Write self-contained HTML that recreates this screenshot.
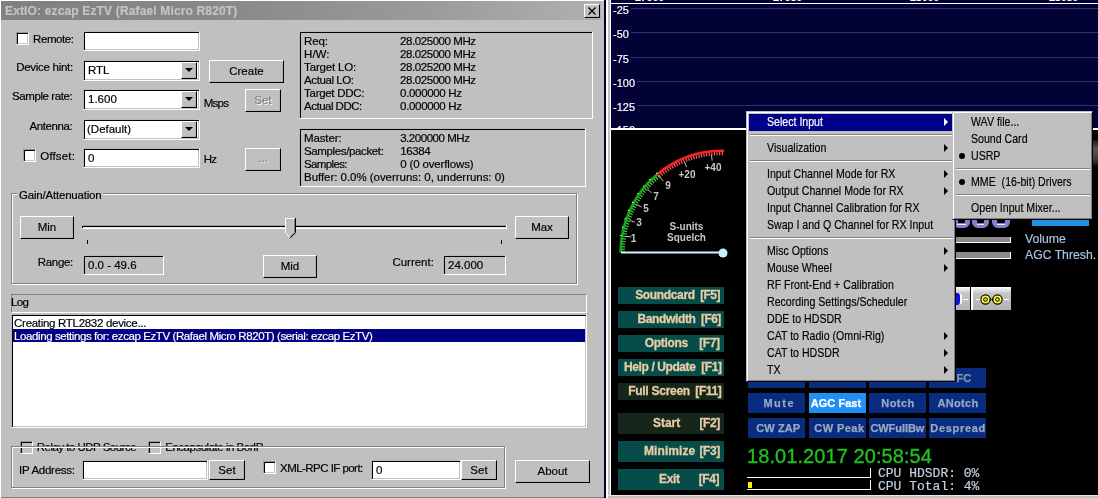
<!DOCTYPE html>
<html>
<head>
<meta charset="utf-8">
<title>ExtIO: ezcap EzTV (Rafael Micro R820T)</title>
<style>
*{box-sizing:border-box;margin:0;padding:0}
html,body{width:1098px;height:498px;overflow:hidden;background:#000}
body{position:relative;will-change:transform;font-family:"Liberation Sans",sans-serif;font-size:11.5px;color:#000;line-height:13px;-webkit-text-stroke:.18px}
.a{position:absolute;white-space:nowrap}
#dlg{left:0;top:0;width:604px;height:498px;background:#c0c0c0;border-left:1px solid #fff;border-top:1px solid #fff}
#dlg .in{left:0;top:0;width:603px;height:497px;border-bottom:1px solid #808080}
#title{left:1px;top:1px;width:600px;height:19px;background:linear-gradient(90deg,#808080 0,#888 36%,#9a9a9a 70%,#b0b0b0 100%);color:#c4c4c4;font-weight:bold;font-size:12px;line-height:20px;padding-top:0;padding-left:4px;letter-spacing:.15px}
.btn{position:absolute;background:#c0c0c0;border:1px solid;border-color:#fff #000 #000 #fff;box-shadow:inset -1px -1px 0 #b4b4b4;text-align:center;white-space:nowrap}
.dis{color:#808080;text-shadow:1px 1px 0 #fff}
.sunk{position:absolute;background:#fff;border:1px solid;border-color:#b8b8b8 #fff #fff #b8b8b8;box-shadow:inset 1px 1px 0 #000,inset -1px -1px 0 #c0c0c0;white-space:nowrap}
.ro{background:#c0c0c0}
.chk{position:absolute;width:13px;height:13px;background:#fff;border:1px solid;border-color:#989898 #fff #fff #989898;box-shadow:inset 1px 1px 0 #000,inset -1px -1px 0 #c8c8c8}
.grp{position:absolute;border:1px solid #808080;box-shadow:inset 1px 1px 0 #fff,1px 1px 0 #fff}
.fr{position:absolute;border:1px solid;border-color:#808080 #fff #fff #808080}
.dd{position:absolute;right:2px;top:1px;width:16px;bottom:1px;background:#c0c0c0;border:1px solid;border-color:#fff #000 #000 #fff;box-shadow:inset -1px -1px 0 #b0b0b0}
.dd:after{content:"";position:absolute;left:3px;top:5px;border:solid transparent;border-width:4.4px 4px 0;border-top-color:#000;margin-left:-.5px}
.n{letter-spacing:-.2px}
#app{left:604px;top:0;width:494px;height:498px;background:#000}
.tb{position:absolute;height:17px;background:#064c48;color:#e8cca6;font-weight:bold;font-size:12px;line-height:17px;left:618px;width:106px;white-space:nowrap;-webkit-text-stroke:.3px #e8cca6}
.tb.h{height:21px;line-height:21px}
.tb.o{background:#16261a}
.tb span{position:absolute;top:0}
.bb{position:absolute;width:57px;height:20px;background:#072c80;color:#98a8c2;overflow:hidden;font-weight:bold;font-size:11px;line-height:20px;text-align:center;white-space:nowrap;-webkit-text-stroke:.25px}
.menu{position:absolute;background:#c0c0c0;border:1px solid;border-color:#c0c0c0 #000 #000 #c0c0c0;box-shadow:inset 1px 1px 0 #fff,inset -1px -1px 0 #808080}
.mi{position:absolute;left:2px;right:2px;height:17px;line-height:16px;white-space:nowrap;font-size:13px}
.mi span{display:inline-block;transform:scaleX(.815);transform-origin:0 50%}
.mi.sel{background:#00008a;color:#fff}
.mi b{position:absolute;right:5px;top:3.5px;border:solid transparent;border-width:4px 0 4px 4.6px;border-left-color:#000;width:0;height:0}
.mi.sel b{border-left-color:#fff}
.mi i{position:absolute;left:4px;top:5px;width:6px;height:6px;border-radius:3px;background:#000}
.ms{position:absolute;left:3px;right:2px;height:2px;border-top:1px solid #808080;border-bottom:1px solid #fff}
</style>
</head>
<body>
<!-- ================= LEFT DIALOG ================= -->
<div id="dlg" class="a"><div class="in a"></div></div>
<div id="title" class="a">ExtIO: ezcap EzTV (Rafael Micro R820T)</div>
<div class="btn" style="left:584px;top:4px;width:16px;height:14px"><svg width="14" height="12" style="position:absolute;left:0;top:0"><path d="M3.5 2.5l7 7M10.5 2.5l-7 7" stroke="#000" stroke-width="1.350" fill="none"/></svg></div>
<div class="chk" style="left:16px;top:32px"></div>
<div class="a" style="left:33.1px;top:33px;font-size:11.5px;letter-spacing:-0.44px">Remote:</div>
<div class="sunk" style="left:83px;top:31px;width:117px;height:20px;line-height:18px;padding-left:4px"></div>
<div class="a" style="left:16.2px;top:61px;font-size:11.5px;letter-spacing:-0.28px">Device hint:</div>
<div class="sunk" style="left:83px;top:60px;width:117px;height:21px;line-height:19px;padding-left:4px">RTL<div class="dd"></div></div>
<div class="btn" style="left:209px;top:60px;width:75px;height:23px;line-height:21px">Create</div>
<div class="a" style="left:12.1px;top:90px;font-size:11.5px;letter-spacing:-0.42px">Sample rate:</div>
<div class="sunk" style="left:83px;top:89px;width:117px;height:21px;line-height:19px;padding-left:4px">1.600<div class="dd"></div></div>
<div class="a" style="left:203.8px;top:97px;font-size:11.5px;letter-spacing:-0.76px">Msps</div>
<div class="btn dis" style="left:245px;top:89px;width:36px;height:23px;line-height:21px">Set</div>
<div class="a" style="left:29.6px;top:120px;font-size:11.5px;letter-spacing:-0.42px">Antenna:</div>
<div class="sunk" style="left:83px;top:119px;width:117px;height:21px;line-height:19px;padding-left:3px">(Default)<div class="dd"></div></div>
<div class="chk" style="left:23px;top:149px"></div>
<div class="a" style="left:40.3px;top:150px;font-size:11.5px;letter-spacing:0.15px">Offset:</div>
<div class="sunk" style="left:83px;top:148px;width:117px;height:20px;line-height:18px;padding-left:4px">0</div>
<div class="a" style="left:203.8px;top:153px;font-size:11.5px;letter-spacing:-0.86px">Hz</div>
<div class="btn dis" style="left:245px;top:148px;width:36px;height:23px;line-height:19px">...</div>
<div class="sunk ro" style="left:299px;top:31px;width:294px;height:88px"></div>
<div class="a" style="left:304.1px;top:35px;font-size:11.5px;letter-spacing:-0.17px">Req:</div>
<div class="a" style="left:400.1px;top:35px;font-size:11.5px;letter-spacing:-0.44px">28.025000 MHz</div>
<div class="a" style="left:304.1px;top:48px;font-size:11.5px;letter-spacing:-0.01px">H/W:</div>
<div class="a" style="left:400.1px;top:48px;font-size:11.5px;letter-spacing:-0.44px">28.025000 MHz</div>
<div class="a" style="left:304.1px;top:61px;font-size:11.5px;letter-spacing:-0.17px">Target LO:</div>
<div class="a" style="left:400.1px;top:61px;font-size:11.5px;letter-spacing:-0.44px">28.025200 MHz</div>
<div class="a" style="left:304.1px;top:74px;font-size:11.5px;letter-spacing:-0.42px">Actual LO:</div>
<div class="a" style="left:400.1px;top:74px;font-size:11.5px;letter-spacing:-0.44px">28.025000 MHz</div>
<div class="a" style="left:304.1px;top:87px;font-size:11.5px;letter-spacing:-0.3px">Target DDC:</div>
<div class="a" style="left:400.1px;top:87px;font-size:11.5px;letter-spacing:-0.33px">0.000000 Hz</div>
<div class="a" style="left:304.1px;top:100px;font-size:11.5px;letter-spacing:-0.52px">Actual DDC:</div>
<div class="a" style="left:400.1px;top:100px;font-size:11.5px;letter-spacing:-0.33px">0.000000 Hz</div>
<div class="sunk ro" style="left:299px;top:128px;width:287px;height:59px"></div>
<div class="a" style="left:304.0px;top:132px;font-size:11.5px;letter-spacing:-0.12px">Master:</div>
<div class="a" style="left:400.2px;top:132px;font-size:11.5px;letter-spacing:-0.46px">3.200000 MHz</div>
<div class="a" style="left:304.0px;top:145px;font-size:11.5px;letter-spacing:-0.37px">Samples/packet:</div>
<div class="a" style="left:400.2px;top:145px;font-size:11.5px;letter-spacing:-0.4px">16384</div>
<div class="a" style="left:304.0px;top:158px;font-size:11.5px;letter-spacing:-0.63px">Samples:</div>
<div class="a" style="left:400.2px;top:158px;font-size:11.5px;letter-spacing:-0.14px">0 (0 overflows)</div>
<div class="a" style="left:304.0px;top:171px;font-size:11.5px;letter-spacing:-0.04px">Buffer: 0.0% (overruns: 0, underruns: 0)</div>
<div class="grp" style="left:11px;top:193px;width:566px;height:91px"></div>
<div class="a" style="left:17.1px;top:189px;font-size:11.5px;letter-spacing:-0.21px;background:#c0c0c0;padding:0 2px">Gain/Attenuation</div>
<div class="btn" style="left:20px;top:216px;width:54px;height:23px;line-height:21px">Min</div>
<div class="btn" style="left:515px;top:216px;width:54px;height:23px;line-height:21px">Max</div>
<div class="a" style="left:82px;top:225px;width:425px;height:1px;background:#989898"></div><div class="a" style="left:82px;top:226px;width:424px;height:1px;background:#000"></div><div class="a" style="left:83px;top:227px;width:423px;height:1px;background:#e0e0e0"></div><div class="a" style="left:82px;top:228px;width:425px;height:1px;background:#fff"></div><div class="a" style="left:506px;top:225px;width:1px;height:4px;background:#fff"></div><div class="a" style="left:82px;top:227px;width:1px;height:1px;background:#000"></div>
<svg class="a" style="left:284px;top:217px" width="13" height="23" viewBox="0 0 13 23"><path d="M1.5 1.5h9v14l-4.5 5-4.500-5z" fill="#c0c0c0"/><path d="M1.500 15.500v-14h9" stroke="#fff" fill="none"/><path d="M1.500 15.500l4.500 5" stroke="#fff" fill="none"/><path d="M11.500 1v14.700l-5.500 5.500" stroke="#000" fill="none"/><path d="M10.500 2v13.500l-4.500 4.500" stroke="#808080" fill="none"/></svg>
<div class="a" style="left:87px;top:240px;width:1px;height:4px;background:#000"></div>
<div class="a" style="left:501px;top:240px;width:1px;height:4px;background:#000"></div>
<div class="a" style="left:37.8px;top:256px;font-size:11.5px;letter-spacing:-0.32px">Range:</div>
<div class="sunk ro" style="left:83px;top:255px;width:81px;height:20px;line-height:18px;padding-left:4px">0.0 - 49.6</div>
<div class="btn" style="left:263px;top:255px;width:54px;height:23px;line-height:21px">Mid</div>
<div class="a" style="left:392.4px;top:256px;font-size:11.5px;letter-spacing:-0.01px">Current:</div>
<div class="sunk ro" style="left:443px;top:255px;width:63px;height:20px;line-height:18px;padding-left:4px">24.000</div>
<div class="fr" style="left:11px;top:294px;width:576px;height:19px"></div>
<div class="a" style="left:11.1px;top:296px;font-size:11.5px;letter-spacing:-0.69px">Log</div>
<div class="sunk" style="left:11px;top:314px;width:576px;height:114px"></div>
<div class="a" style="left:14.1px;top:317px;font-size:11.5px;letter-spacing:-0.3px">Creating RTL2832 device...</div>
<div class="a" style="left:13px;top:329px;width:572px;height:13px;background:#000080"></div>
<div class="a" style="left:14.1px;top:330px;font-size:11.5px;letter-spacing:-0.41px;color:#fff">Loading settings for: ezcap EzTV (Rafael Micro R820T) (serial: ezcap EzTV)</div>
<div class="chk" style="left:20px;top:441px;background:#c0c0c0"></div>
<div class="a" style="left:36.8px;top:441px;font-size:11.5px;letter-spacing:-0.52px">Relay to UDP Source</div>
<div class="chk" style="left:148px;top:441px;background:#c0c0c0"></div>
<div class="a" style="left:165.2px;top:441px;font-size:11.5px;letter-spacing:-0.48px">Encapsulate in BorIP</div>
<div class="grp" style="left:11px;top:446px;width:494px;height:42px"></div>
<div class="a" style="left:19.1px;top:464px;font-size:11.5px;letter-spacing:-0.28px">IP Address:</div>
<div class="sunk" style="left:82px;top:460px;width:126px;height:20px;line-height:18px;padding-left:4px"></div>
<div class="btn" style="left:209px;top:460px;width:36px;height:20px;line-height:19px">Set</div>
<div class="chk" style="left:263px;top:461px"></div>
<div class="a" style="left:280.1px;top:462px;font-size:11.5px;letter-spacing:-0.55px">XML-RPC IF port:</div>
<div class="sunk" style="left:371px;top:460px;width:90px;height:20px;line-height:18px;padding-left:4px">0</div>
<div class="btn" style="left:461px;top:460px;width:36px;height:20px;line-height:19px">Set</div>
<div class="btn" style="left:515px;top:460px;width:75px;height:23px;line-height:21px">About</div>
<!-- ================= RIGHT APP ================= -->
<div id="app" class="a"></div>
<div class="a" style="left:604px;top:0;width:2px;height:498px;background:#000030"></div>
<div class="a" style="left:606px;top:0;width:2px;height:498px;background:#fff"></div>
<div class="a" style="left:608px;top:0;width:2px;height:498px;background:#c0c0c0"></div>
<div class="a" style="left:610px;top:0;width:1px;height:495px;background:#fff"></div>
<div class="a" style="left:608px;top:495px;width:490px;height:3px;background:#c0c0c0;border-top:1px solid #e8e8e8"></div>
<div class="a" id="spec" style="left:611px;top:0;width:487px;height:128px;background:#020236;color:#fff;font-size:11px;overflow:hidden">
<div class="a" style="left:0;top:3px;width:487px;height:1px;background:#fff"></div>
<div class="a" style="left:19px;top:8px;width:468px;height:1px;background:#30306a"></div>
<div class="a" style="left:2px;top:4px;background:#020236;padding-right:2px;line-height:13px">-25</div>
<div class="a" style="left:19px;top:32px;width:468px;height:1px;background:#30306a"></div>
<div class="a" style="left:2px;top:28px;background:#020236;padding-right:2px;line-height:13px">-50</div>
<div class="a" style="left:19px;top:57px;width:468px;height:1px;background:#30306a"></div>
<div class="a" style="left:2px;top:53px;background:#020236;padding-right:2px;line-height:13px">-75</div>
<div class="a" style="left:19px;top:81px;width:468px;height:1px;background:#30306a"></div>
<div class="a" style="left:2px;top:77px;background:#020236;padding-right:2px;line-height:13px">-100</div>
<div class="a" style="left:19px;top:105px;width:468px;height:1px;background:#30306a"></div>
<div class="a" style="left:2px;top:101px;background:#020236;padding-right:2px;line-height:13px">-125</div>
<div class="a" style="left:19px;top:129px;width:468px;height:1px;background:#30306a"></div>
<div class="a" style="left:2px;top:124px;background:#020236;padding-right:2px;line-height:13px">-150</div>
<div class="a" style="left:24px;top:-9px;font-weight:bold;line-height:13px;letter-spacing:-.3px">27900</div>
<div class="a" style="left:162px;top:-9px;font-weight:bold;line-height:13px;letter-spacing:-.3px">27950</div>
<div class="a" style="left:299px;top:-9px;font-weight:bold;line-height:13px;letter-spacing:-.3px">28000</div>
<div class="a" style="left:438px;top:-9px;font-weight:bold;line-height:13px;letter-spacing:-.3px">28050</div>
</div>
<div class="a" style="left:611px;top:128px;width:487px;height:2px;background:#fff"></div>
<svg class="a" style="left:611px;top:130px" width="140" height="130" viewBox="611 130 140 130">
<path d="M620.6 252.5A101.7 101.7 0 0 1 657.5 174.1" stroke="#10a810" stroke-width="2.6" fill="none"/>
<path d="M657.5 174.1A101.7 101.7 0 0 1 724.1 150.8" stroke="#ff2020" stroke-width="2.6" fill="none"/>
<path d="M623.3 252.5A99 99 0 0 1 659.2 176.2" stroke="#48c848" stroke-width="3.4" fill="none" stroke-dasharray="1.2 1.4"/>
<path d="M659.2 176.2A99 99 0 0 1 724.0 153.5" stroke="#ff5858" stroke-width="3.4" fill="none" stroke-dasharray="1.2 1.4"/>
<circle cx="620.9" cy="235.4" r=".7" fill="#e8ffe8"/>
<circle cx="622.7" cy="226.9" r=".7" fill="#e8ffe8"/>
<circle cx="625.2" cy="218.9" r=".7" fill="#e8ffe8"/>
<circle cx="628.5" cy="210.4" r=".7" fill="#e8ffe8"/>
<circle cx="632.7" cy="202.2" r=".7" fill="#e8ffe8"/>
<circle cx="637.9" cy="193.8" r=".7" fill="#e8ffe8"/>
<circle cx="643.8" cy="186.1" r=".7" fill="#e8ffe8"/>
<circle cx="650.0" cy="179.4" r=".7" fill="#e8ffe8"/>
<circle cx="656.8" cy="173.3" r=".7" fill="#e8ffe8"/>
<path d="M625.7 236.2L631.1 237.1" stroke="#c0c0c0" stroke-width="1"/>
<path d="M629.7 220.4L634.9 222.2" stroke="#c0c0c0" stroke-width="1"/>
<path d="M636.8 204.5L641.6 207.2" stroke="#c0c0c0" stroke-width="1"/>
<path d="M647.4 189.2L651.6 192.8" stroke="#c0c0c0" stroke-width="1"/>
<path d="M659.8 177.0L663.3 181.2" stroke="#c0c0c0" stroke-width="1"/>
<path d="M684.5 162.1L686.6 167.2" stroke="#c0c0c0" stroke-width="1"/>
<path d="M711.5 155.1L712.1 160.6" stroke="#c0c0c0" stroke-width="1"/>
<text x="633.5" y="242" text-anchor="middle" font-family="Liberation Sans,sans-serif" font-weight="bold" font-size="10" fill="#c8c8c8">1</text>
<text x="639" y="226" text-anchor="middle" font-family="Liberation Sans,sans-serif" font-weight="bold" font-size="10" fill="#c8c8c8">3</text>
<text x="646" y="212" text-anchor="middle" font-family="Liberation Sans,sans-serif" font-weight="bold" font-size="10" fill="#c8c8c8">5</text>
<text x="656" y="199.5" text-anchor="middle" font-family="Liberation Sans,sans-serif" font-weight="bold" font-size="10" fill="#c8c8c8">7</text>
<text x="668" y="189" text-anchor="middle" font-family="Liberation Sans,sans-serif" font-weight="bold" font-size="10" fill="#c8c8c8">9</text>
<text x="687" y="178" text-anchor="middle" font-family="Liberation Sans,sans-serif" font-weight="bold" font-size="10" fill="#c8c8c8">+20</text>
<text x="713" y="171" text-anchor="middle" font-family="Liberation Sans,sans-serif" font-weight="bold" font-size="10" fill="#c8c8c8">+40</text>
<text x="686.5" y="229.500" text-anchor="middle" font-family="Liberation Sans,sans-serif" font-weight="bold" font-size="10" fill="#c8c8c8">S-units</text>
<text x="686.5" y="240.500" text-anchor="middle" font-family="Liberation Sans,sans-serif" font-weight="bold" font-size="10" fill="#c8c8c8">Squelch</text>
<rect x="621" y="251.500" width="102" height="2" fill="#d0f4ff"/>
<circle cx="723" cy="253" r="4.500" fill="#c8f0ff"/>
</svg>
<div class="tb" style="top:287px"><span style="left:17.2px;letter-spacing:-0.35px">Soundcard</span><span style="left:82.2px;letter-spacing:-0.6px">[F5]</span></div>
<div class="tb" style="top:311px"><span style="left:19.4px;letter-spacing:-0.35px">Bandwidth</span><span style="left:83.1px;letter-spacing:-0.63px">[F6]</span></div>
<div class="tb" style="top:335px"><span style="left:26.7px;letter-spacing:-0.3px">Options</span><span style="left:81.2px;letter-spacing:-0.43px">[F7]</span></div>
<div class="tb" style="top:359px"><span style="left:6.1px;letter-spacing:-0.41px">Help / Update</span><span style="left:83.2px;letter-spacing:-0.43px">[F1]</span></div>
<div class="tb o" style="top:383px"><span style="left:10.2px;letter-spacing:-0.27px">Full Screen</span><span style="left:77.3px;letter-spacing:-0.38px">[F11]</span></div>
<div class="tb h o" style="top:413px"><span style="left:35.0px;letter-spacing:-0.04px">Start</span><span style="left:81.5px;letter-spacing:-0.43px">[F2]</span></div>
<div class="tb h" style="top:441px"><span style="left:26.0px;letter-spacing:0.08px">Minimize</span><span style="left:81.5px;letter-spacing:-0.43px">[F3]</span></div>
<div class="tb h" style="top:469px"><span style="left:41.0px;letter-spacing:-0.37px">Exit</span><span style="left:80.8px;letter-spacing:-0.43px">[F4]</span></div>
<div class="bb" style="left:748px;top:368px"></div><div class="bb" style="left:809px;top:368px"></div><div class="bb" style="left:869px;top:368px"></div><div class="bb" style="left:929px;top:368px;text-align:left;padding-left:19.5px;color:#8494b4">AFC</div>
<div class="bb" style="left:748px;top:393px;text-align:left;padding-left:15.4px;letter-spacing:1.48px">Mute</div>
<div class="bb" style="left:809px;top:393px;text-align:left;padding-left:1.7px;letter-spacing:0.05px;background:#2090f4;color:#fff">AGC Fast</div>
<div class="bb" style="left:869px;top:393px;text-align:left;padding-left:12.3px;letter-spacing:0.43px">Notch</div>
<div class="bb" style="left:929px;top:393px;text-align:left;padding-left:8.4px;letter-spacing:0.34px">ANotch</div>
<div class="bb" style="left:748px;top:418px;text-align:left;padding-left:8.3px;letter-spacing:0.08px">CW ZAP</div>
<div class="bb" style="left:809px;top:418px;text-align:left;padding-left:5.3px;letter-spacing:0.44px">CW Peak</div>
<div class="bb" style="left:869px;top:418px;text-align:left;padding-left:1.4px;letter-spacing:-0.06px">CWFullBw</div>
<div class="bb" style="left:929px;top:418px;text-align:left;padding-left:1.3px;letter-spacing:0.69px">Despread</div>
<div class="a" style="left:747px;top:444px;font-size:20px;line-height:24px;color:#22c022;letter-spacing:.08px;-webkit-text-stroke:.35px #22c022">18.01.2017 20:58:54</div>
<div class="a" style="left:747px;top:468px;width:124px;height:10px;border-right:1px solid #fff;border-bottom:1px solid #fff"></div>
<div class="a" style="left:747px;top:480px;width:124px;height:10px;border-right:1px solid #fff;border-bottom:1px solid #fff"></div>
<div class="a" style="left:748px;top:482px;width:4px;height:6px;background:#ffec00"></div>
<div class="a" style="left:878px;top:467px;font-family:'Liberation Mono',monospace;font-size:13px;line-height:13px;color:#c4d4e4">CPU HDSDR: 0%<br>CPU Total: 4%</div>
<div class="a" style="left:953px;top:210px;width:17px;height:18px;border:5px solid #8080cc;border-radius:6px"></div><div class="a" style="left:957px;top:224px;width:9px;height:1px;background:#e8e8ff"></div>
<div class="a" style="left:972px;top:210px;width:17px;height:18px;border:5px solid #8080cc;border-radius:6px"></div><div class="a" style="left:977px;top:224px;width:7px;height:1px;background:#e8e8ff"></div>
<div class="a" style="left:992px;top:210px;width:18px;height:18px;border:5px solid #8080cc;border-radius:6px"></div><div class="a" style="left:997px;top:224px;width:8px;height:1px;background:#e8e8ff"></div>
<div class="a" style="left:1032px;top:220px;width:57px;height:6px;background:#2090e0"></div>
<div class="a" style="left:956px;top:237px;width:55px;height:6px;background:#8a8a8a;border-right:1px solid #fff;border-bottom:1px solid #fff"></div>
<div class="a" style="left:956px;top:252px;width:55px;height:7px;background:#8a8a8a;border-right:1px solid #fff;border-bottom:1px solid #fff"></div>
<div class="a" style="left:1025px;top:231px;font-size:13px;line-height:16px;color:#a8c4e4;transform:scaleX(.94);transform-origin:0 0">Volume<br>AGC Thresh.</div>
<div class="a" style="left:950px;top:287px;width:20px;height:23px;background:linear-gradient(#f4f4f4,#c4c4c8 25%,#b4b4b8);border-top:1px solid #fff"><div class="a" style="left:4px;top:5px;width:8px;height:12px;background:#1010d8;border-right:2px solid #fff;border-radius:0 4px 4px 0"></div><div class="a" style="left:13px;top:11px;width:5px;height:1px;background:#fff"></div></div>
<div class="a" style="left:971px;top:287px;width:40px;height:23px;background:linear-gradient(#f4f4f4,#c4c4c8 25%,#b4b4b8);border-top:1px solid #fff;border-left:2px solid #fff"><svg width="38" height="22" viewBox="0 0 38 22" style="position:absolute;left:0;top:0"><path d="M3 11.500h5M31 11.500h5" stroke="#fff" stroke-width="1"/><circle cx="12.500" cy="11.500" r="4.600" fill="#ffff20" stroke="#000" stroke-width="1.100"/><circle cx="24.500" cy="11.500" r="4.600" fill="#ffff20" stroke="#000" stroke-width="1.100"/><path d="M17 9.500l1.500 2-1.500 2zM20 9.500l-1.500 2 1.500 2z" fill="#000"/><circle cx="12.500" cy="11.500" r="1.900" fill="#d0b8a8" stroke="#000" stroke-width=".9"/><circle cx="24.500" cy="11.500" r="1.900" fill="#d0b8a8" stroke="#000" stroke-width=".9"/></svg></div>
<div class="a" style="left:1093px;top:140px;width:5px;height:26px;background:linear-gradient(#181818,#585858 35%,#404040 70%,#101010)"></div>
<div class="menu" style="left:746px;top:111px;width:210px;height:271px"><div class="mi sel" style="top:2px;padding-left:17.5px"><span>Select Input</span><b></b></div><div class="ms" style="top:22px"></div><div class="mi" style="top:28px;padding-left:17.5px"><span>Visualization</span><b></b></div><div class="ms" style="top:48px"></div><div class="mi" style="top:54px;padding-left:17.5px"><span>Input Channel Mode for RX</span><b></b></div><div class="mi" style="top:71px;padding-left:17.5px"><span>Output Channel Mode for RX</span><b></b></div><div class="mi" style="top:88px;padding-left:17.5px"><span>Input Channel Calibration for RX</span></div><div class="mi" style="top:105px;padding-left:17.5px"><span>Swap I and Q Channel for RX Input</span></div><div class="ms" style="top:125px"></div><div class="mi" style="top:131px;padding-left:17.5px"><span>Misc Options</span><b></b></div><div class="mi" style="top:148px;padding-left:17.5px"><span>Mouse Wheel</span><b></b></div><div class="mi" style="top:165px;padding-left:17.5px"><span>RF Front-End + Calibration</span></div><div class="mi" style="top:182px;padding-left:17.5px"><span>Recording Settings/Scheduler</span></div><div class="mi" style="top:199px;padding-left:17.5px"><span>DDE to HDSDR</span></div><div class="mi" style="top:216px;padding-left:17.5px"><span>CAT to Radio (Omni-Rig)</span><b></b></div><div class="mi" style="top:233px;padding-left:17.5px"><span>CAT to HDSDR</span><b></b></div><div class="mi" style="top:250px;padding-left:17.5px"><span>TX</span><b></b></div></div>
<div class="menu" style="left:952px;top:111px;width:141px;height:109px"><div class="mi" style="top:2px;padding-left:16px"><span>WAV file...</span></div><div class="mi" style="top:19px;padding-left:16px"><span>Sound Card</span></div><div class="mi" style="top:36px;padding-left:16px"><i></i><span>USRP</span></div><div class="ms" style="top:56px"></div><div class="mi" style="top:62px;padding-left:16px"><i></i><span>MME &nbsp;(16-bit) Drivers</span></div><div class="ms" style="top:82px"></div><div class="mi" style="top:88px;padding-left:16px"><span>Open Input Mixer...</span></div></div>
</body>
</html>
